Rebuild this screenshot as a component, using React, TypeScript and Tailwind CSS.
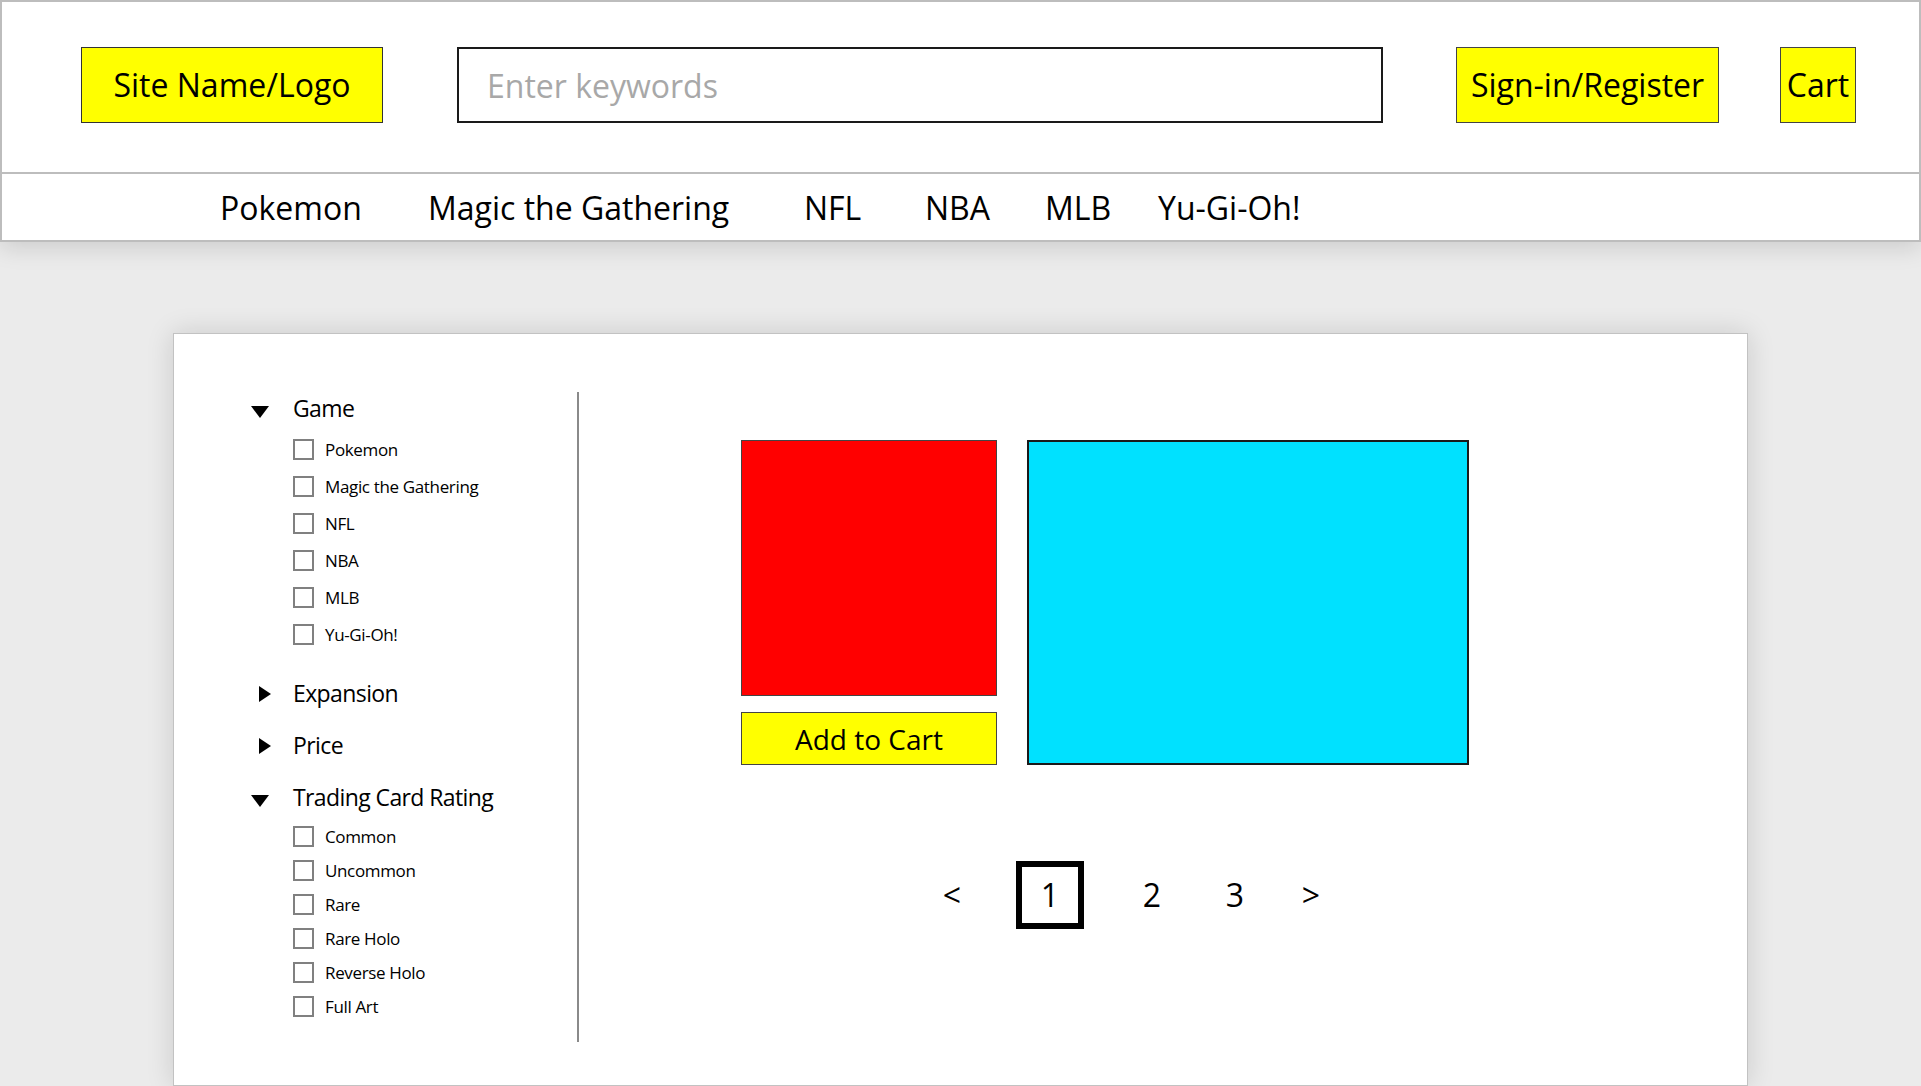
import React from "react";

const categories = [
  { label: "Pokemon", w: "w-[208px]" },
  { label: "Magic the Gathering", w: "w-[376px]" },
  { label: "NFL", w: "w-[121px]" },
  { label: "NBA", w: "w-[120px]" },
  { label: "MLB", w: "w-[113px]" },
  { label: "Yu-Gi-Oh!", w: "" },
];

const games = ["Pokemon", "Magic the Gathering", "NFL", "NBA", "MLB", "Yu-Gi-Oh!"];
const ratings = ["Common", "Uncommon", "Rare", "Rare Holo", "Reverse Holo", "Full Art"];

function Caret({ open }: { open: boolean }) {
  return (
    <div className="flex w-[42px] shrink-0 items-center">
      {open ? (
        <svg width="18" height="12" viewBox="0 0 18 12" className="translate-y-[4px]">
          <polygon points="0,0 18,0 9,12" fill="#000" />
        </svg>
      ) : (
        <svg width="12" height="16" viewBox="0 0 12 16" className="ml-[8px] translate-y-[1px]">
          <polygon points="0,0 12,8 0,16" fill="#000" />
        </svg>
      )}
    </div>
  );
}

function FilterHeader({ title, open, className = "" }: { title: string; open: boolean; className?: string }) {
  return (
    <div className={`flex h-[30px] items-center ${className}`}>
      <Caret open={open} />
      <span className="text-[23px] leading-none tracking-[-0.6px] text-black">{title}</span>
    </div>
  );
}

function CheckRow({ label, h }: { label: string; h: string }) {
  return (
    <label className={`flex ${h} items-center pl-[42px]`}>
      <span className="h-[21px] w-[21px] shrink-0 border-2 border-[#808080] bg-white" />
      <span className="ml-[11px] text-[17px] leading-none tracking-[-0.35px] text-black">{label}</span>
    </label>
  );
}

export default function App() {
  return (
    <div className="h-[1086px] overflow-hidden bg-[#ebebeb] font-['Open_Sans',sans-serif] text-black">
      {/* header */}
      <header className="relative z-10 border-2 border-[#bdbdbd] bg-white shadow-[0_6px_22px_rgba(0,0,0,0.13)]">
        <div className="flex h-[170px] items-start pl-[79px] pt-[45px]">
          <div className="flex h-[76px] w-[302px] items-center justify-center border border-[#333] bg-[#ffff00] text-[32px] leading-none">
            Site Name/Logo
          </div>
          <input
            placeholder="Enter keywords"
            className="ml-[74px] h-[76px] w-[926px] border-2 border-[#1a1a1a] bg-white pl-[28px] text-[32px] leading-none outline-none placeholder:text-[#a8a8a8]"
          />
          <button className="ml-[73px] flex h-[76px] w-[263px] items-center justify-center border border-[#444] bg-[#ffff00] text-[32px] leading-none">
            Sign-in/Register
          </button>
          <button className="ml-[61px] flex h-[76px] w-[76px] items-center justify-center border border-[#444] bg-[#ffff00] text-[32px] leading-none">
            Cart
          </button>
        </div>
        <nav className="flex h-[68px] items-center border-t-2 border-[#bdbdbd] pl-[218px] pt-[2px]">
          {categories.map((c) => (
            <a key={c.label} className={`${c.w} shrink-0 text-[32px] leading-none`}>
              {c.label}
            </a>
          ))}
        </nav>
      </header>

      {/* main card */}
      <main className="ml-[173px] mt-[91px] flex h-[753px] w-[1575px] border border-[#c2c2c2] bg-white shadow-[0_0_26px_rgba(0,0,0,0.14)]">
        <aside className="w-[403px] shrink-0 pl-[77px] pt-[59px]">
          <FilterHeader title="Game" open />
          <div className="mt-[8px]">
            {games.map((g) => (
              <CheckRow key={g} label={g} h="h-[37px]" />
            ))}
          </div>
          <FilterHeader title="Expansion" open={false} className="mt-[25px]" />
          <FilterHeader title="Price" open={false} className="mt-[22px]" />
          <FilterHeader title="Trading Card Rating" open className="mt-[22px]" />
          <div className="mt-[7px]">
            {ratings.map((r) => (
              <CheckRow key={r} label={r} h="h-[34px]" />
            ))}
          </div>
        </aside>

        <div className="mt-[58px] h-[650px] w-[2px] shrink-0 bg-[#8a8a8a]" />

        <section className="flex-1 pl-[162px] pt-[106px]">
          <div className="flex gap-[30px]">
            <div className="flex w-[256px] flex-col">
              <div className="h-[256px] border border-[#444] bg-[#ff0000]" />
              <button className="mt-[16px] flex h-[53px] items-center justify-center border border-[#444] bg-[#ffff00] text-[28px] leading-none">
                Add to Cart
              </button>
            </div>
            <div className="h-[325px] w-[442px] border-2 border-[#1a1a1a] bg-[#00e1ff]" />
          </div>

          <div className="mt-[96px] flex items-center pl-[191px] text-[32px] leading-none">
            <span className="flex w-[40px] justify-center">&lt;</span>
            <span className="ml-[44px] flex h-[68px] w-[68px] items-center justify-center border-[6px] border-black">1</span>
            <span className="ml-[48px] flex w-[40px] justify-center">2</span>
            <span className="ml-[43px] flex w-[40px] justify-center">3</span>
            <span className="ml-[36px] flex w-[40px] justify-center">&gt;</span>
          </div>
        </section>
      </main>
    </div>
  );
}
